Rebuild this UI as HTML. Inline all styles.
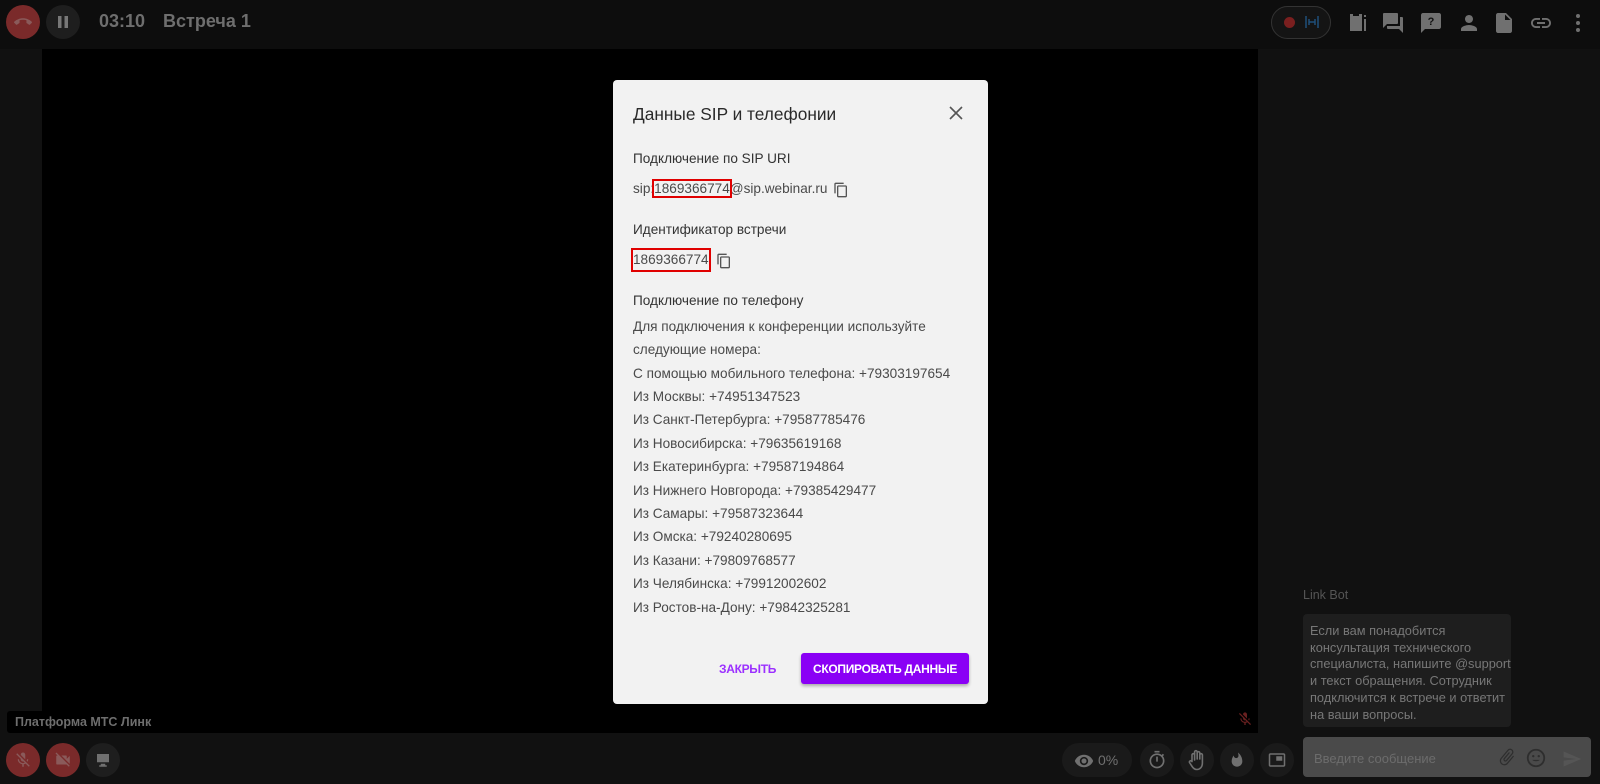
<!DOCTYPE html>
<html><head><meta charset="utf-8"><style>
*{margin:0;padding:0;box-sizing:border-box}
body{width:1600px;height:784px;background:#111;font-family:"Liberation Sans",Arial,sans-serif;position:relative;overflow:hidden}
.a{position:absolute}
.c{position:absolute;border-radius:50%;display:flex;align-items:center;justify-content:center}
.ln{position:absolute;left:633px;font-size:13.6px;color:#4a4a4a;white-space:nowrap}
</style></head><body>
<!-- top bar -->
<div class="a" style="left:0;top:0;width:1600px;height:49px;background:#0d0d0d"></div>
<div class="c" style="left:6px;top:5px;width:34px;height:34px;background:#7a2a2a"><svg width="18" height="18" viewBox="0 0 24 24"><path fill="#8a5a5a" d="M12 9c-1.6 0-3.15.25-4.6.72v3.1c0 .39-.23.74-.56.9-.98.49-1.87 1.120-2.66 1.85-.18.18-.43.28-.7.28-.28 0-.53-.11-.71-.29L.29 13.08a.96.96 0 0 1 0-1.4C3.34 8.780 7.46 7 12 7s8.66 1.78 11.71 4.67c.18.18.29.43.29.71 0 .28-.11.53-.29.71l-2.48 2.48c-.18.18-.43.29-.71.29-.27 0-.52-.11-.7-.28-.79-.74-1.69-1.36-2.67-1.85a1 1 0 0 1-.56-.9v-3.1C15.15 9.25 13.6 9 12 9z"/></svg></div>
<div class="c" style="left:46px;top:5px;width:34px;height:34px;background:#1e1e1e"><svg width="14" height="14" viewBox="0 0 14 14"><rect x="2" y="1" width="3.5" height="12" fill="#777"/><rect x="8.5" y="1" width="3.5" height="12" fill="#777"/></svg></div>
<div class="a" style="left:99px;top:11px;font-size:18px;font-weight:bold;color:#6e6e6e">03:10</div>
<div class="a" style="left:163px;top:11px;font-size:18px;font-weight:bold;color:#6e6e6e">Встреча 1</div>
<div class="a" style="left:1271px;top:6px;width:60px;height:33px;border:1px solid #333;border-radius:17px;background:#141414"></div>
<div class="c" style="left:1284px;top:17px;width:11px;height:11px;background:#7a1f1f"></div>
<svg class="a" style="left:1305px;top:14px" width="14" height="16" viewBox="0 0 14 16"><path d="M1 2v12M13 2v12M4 5v6M10 5v6M4 8h6" stroke="#1f4f7a" stroke-width="1.5"/></svg>
<svg class="a" style="left:1345px;top:11px" width="24" height="24" viewBox="0 0 24 24"><path fill="#707070" d="M5 3h3v2h6V3h3v17H5zM8 9h6v1.5H8zm0 3h6v1.5H8zm0 3h6v1.5H8zM19 8h2v12h-2zM19 4h2v2h-2z"/></svg>
<svg class="a" style="left:1381px;top:11px" width="24" height="24" viewBox="0 0 24 24"><path fill="#707070" d="M21 6h-2v9H6v2c0 .55.45 1 1 1h11l4 4V7c0-.55-.45-1-1-1zm-4 6V3c0-.55-.45-1-1-1H3c-.55 0-1 .45-1 1v14l4-4h10c.55 0 1-.45 1-1z"/></svg>
<svg class="a" style="left:1419px;top:11px" width="24" height="24" viewBox="0 0 24 24"><path fill="#707070" d="M20 2H4c-1.1 0-2 .9-2 2v18l4-4h14c1.1 0 2-.9 2-2V4c0-1.1-.9-2-2-2z"/><text x="12" y="14" font-size="11" font-weight="bold" fill="#111" text-anchor="middle" font-family="Liberation Sans">?</text></svg>
<svg class="a" style="left:1457px;top:11px" width="24" height="24" viewBox="0 0 24 24"><path fill="#707070" d="M12 12c2.21 0 4-1.79 4-4s-1.79-4-4-4-4 1.79-4 4 1.79 4 4 4zm0 2c-2.67 0-8 1.34-8 4v2h16v-2c0-2.66-5.33-4-8-4z"/></svg>
<svg class="a" style="left:1492px;top:11px" width="24" height="24" viewBox="0 0 24 24"><path fill="#707070" d="M6 2c-1.1 0-2 .9-2 2v16c0 1.1.9 2 2 2h12c1.1 0 2-.9 2-2V8l-6-6H6zm7 7V3.5L18.5 9H13z"/></svg>
<svg class="a" style="left:1529px;top:11px" width="24" height="24" viewBox="0 0 24 24"><path fill="#707070" d="M3.9 12c0-1.71 1.39-3.1 3.1-3.1h4V7H7c-2.76 0-5 2.24-5 5s2.240 5 5 5h4v-1.9H7c-1.71 0-3.1-1.39-3.1-3.1zM8 13h8v-2H8v2zm9-6h-4v1.9h4c1.71 0 3.1 1.39 3.1 3.1s-1.39 3.1-3.1 3.1h-4V17h4c2.76 0 5-2.24 5-5s-2.24-5-5-5z"/></svg>
<svg class="a" style="left:1566px;top:11px" width="24" height="24" viewBox="0 0 24 24"><circle cx="12" cy="5" r="2" fill="#707070"/><circle cx="12" cy="12" r="2" fill="#707070"/><circle cx="12" cy="19" r="2" fill="#707070"/></svg>
<!-- video -->
<div class="a" style="left:42px;top:49px;width:1216px;height:684px;background:#000"></div>
<div class="a" style="left:7px;top:711px;width:137px;height:22px;background:#000;border-radius:3px"></div>
<div class="a" style="left:15px;top:715px;font-size:12.5px;font-weight:bold;color:#6e6e6e">Платформа МТС Линк</div>
<svg class="a" style="left:1237px;top:711px" width="16" height="16" viewBox="0 0 24 24"><path fill="#6a2020" d="M19 11h-1.7c0 .74-.16 1.43-.43 2.05l1.23 1.23c.56-.98.9-2.09.9-3.28zm-4.02.17c0-.06.02-.11.02-.17V5c0-1.66-1.34-3-3-3S9 3.34 9 5v.18l5.98 5.99zM4.27 3 3 4.27l6.01 6.01V11c0 1.66 1.33 3 2.99 3 .22 0 .44-.03.65-.08l1.66 1.66c-.71.33-1.5.52-2.31.52-2.76 0-5.3-2.1-5.3-5.1H5c0 3.41 2.72 6.23 6 6.72V21h2v-3.28c.91-.13 1.77-.45 2.54-.9L19.73 21 21 19.73 4.27 3z"/></svg>
<!-- chat -->
<div class="a" style="left:1303px;top:588px;font-size:12.5px;color:#555">Link Bot</div>
<div class="a" style="left:1303px;top:614px;width:208px;height:113px;background:#1e1e1e;border-radius:4px;padding:9px 7px;font-size:12.8px;line-height:16.7px;color:#777;white-space:nowrap">Если вам понадобится<br>консультация технического<br>специалиста, напишите @support<br>и текст обращения. Сотрудник<br>подключится к встрече и ответит<br>на ваши вопросы.</div>
<div class="a" style="left:1303px;top:737px;width:288px;height:40px;background:#4a4a4a;border-radius:4px"></div>
<div class="a" style="left:1314px;top:751px;font-size:13px;color:#6c6c6c">Введите сообщение</div>
<svg class="a" style="left:1497px;top:747px" width="20" height="20" viewBox="0 0 24 24"><path fill="#2e2e2e" d="M16.5 6v11.5c0 2.21-1.79 4-4 4s-4-1.79-4-4V5a2.5 2.5 0 0 1 5 0v10.5c0 .55-.45 1-1 1s-1-.45-1-1V6H10v9.5a2.5 2.5 0 0 0 5 0V5c0-2.21-1.79-4-4-4S7 2.79 7 5v12.5c0 3.04 2.46 5.5 5.5 5.5s5.5-2.46 5.5-5.5V6h-1.5z" transform="rotate(40 12 12)"/></svg>
<svg class="a" style="left:1525px;top:747px" width="22" height="22" viewBox="0 0 24 24"><circle cx="12" cy="12" r="9" fill="none" stroke="#2e2e2e" stroke-width="2"/><circle cx="9" cy="10" r="1.3" fill="#2e2e2e"/><circle cx="15" cy="10" r="1.3" fill="#2e2e2e"/><path d="M8 14c1 2 7 2 8 0z" fill="#2e2e2e"/></svg>
<svg class="a" style="left:1562px;top:749px" width="20" height="20" viewBox="0 0 24 24"><path fill="#555" d="M2 21l21-9L2 3v7l15 2-15 2z"/></svg>
<!-- bottom controls -->
<div class="c" style="left:6px;top:743px;width:34px;height:34px;background:#7a2a2a"><svg width="18" height="18" viewBox="0 0 24 24"><path fill="#8a5a5a" d="M19 11h-1.7c0 .74-.16 1.43-.43 2.05l1.23 1.23c.56-.98.9-2.09.9-3.28zm-4.02.17c0-.06.02-.11.02-.17V5c0-1.66-1.34-3-3-3S9 3.34 9 5v.18l5.98 5.99zM4.27 3 3 4.27l6.01 6.01V11c0 1.66 1.33 3 2.99 3 .22 0 .44-.03.65-.08l1.66 1.66c-.71.33-1.5.52-2.31.52-2.76 0-5.3-2.1-5.3-5.1H5c0 3.41 2.72 6.23 6 6.72V21h2v-3.28c.91-.13 1.77-.45 2.54-.9L19.73 21 21 19.73 4.27 3z"/></svg></div>
<div class="c" style="left:46px;top:743px;width:34px;height:34px;background:#7a2a2a"><svg width="18" height="18" viewBox="0 0 24 24"><path fill="#8a5a5a" d="M21 6.5l-4 4V7c0-.55-.45-1-1-1H9.82L21 17.18V6.5zM3.27 2 2 3.27 4.73 6H4c-.55 0-1 .45-1 1v10c0 .55.45 1 1 1h12c.21 0 .39-.08.54-.18L19.73 21 21 19.73 3.27 2z"/></svg></div>
<div class="c" style="left:86px;top:743px;width:34px;height:34px;background:#1e1e1e"><svg width="18" height="18" viewBox="0 0 24 24"><path fill="#707070" d="M4 4h16v11H4zM9 17h6v2h2v2H7v-2h2z"/></svg></div>
<div class="a" style="left:1062px;top:743px;width:70px;height:34px;background:#1a1a1a;border-radius:17px"></div>
<svg class="a" style="left:1074px;top:751px" width="20" height="20" viewBox="0 0 24 24"><path fill="#707070" d="M12 4.5C7 4.5 2.73 7.61 1 12c1.73 4.39 6 7.5 11 7.5s9.27-3.11 11-7.5c-1.73-4.39-6-7.5-11-7.5zM12 17c-2.76 0-5-2.24-5-5s2.24-5 5-5 5 2.24 5 5-2.24 5-5 5zm0-8c-1.66 0-3 1.34-3 3s1.34 3 3 3 3-1.34 3-3-1.34-3-3-3z"/></svg>
<div class="a" style="left:1098px;top:752px;font-size:14px;color:#707070">0%</div>
<div class="c" style="left:1140px;top:743px;width:34px;height:34px;background:#1a1a1a"><svg width="20" height="20" viewBox="0 0 24 24"><path fill="#707070" d="M15 1H9v2h6V1zm-4 13h2V8h-2v6zm8.03-6.61 1.42-1.42c-.43-.51-.9-.99-1.41-1.41l-1.42 1.42A8.96 8.96 0 0 0 12 4c-4.97 0-9 4.03-9 9s4.02 9 9 9 9-4.03 9-9c0-2.12-.74-4.07-1.97-5.61zM12 20c-3.87 0-7-3.13-7-7s3.13-7 7-7 7 3.13 7 7-3.13 7-7 7z"/></svg></div>
<div class="c" style="left:1180px;top:743px;width:34px;height:34px;background:#1a1a1a"><svg width="20" height="22" viewBox="0 0 20 22"><path d="M5 12V6a1.3 1.3 0 0 1 2.6 0v5M7.6 10V3a1.3 1.3 0 0 1 2.6 0v7M10.2 10V4a1.3 1.3 0 0 1 2.6 0v6M12.8 10V6a1.3 1.3 0 0 1 2.6 0v8c0 4-2.5 6.5-5.5 6.5-2.5 0-3.8-1.3-5-3.3L2.5 13.5a1.3 1.3 0 0 1 2.2-1.3L5 12.5" fill="none" stroke="#707070" stroke-width="1.6" stroke-linecap="round" stroke-linejoin="round"/></svg></div>
<div class="c" style="left:1220px;top:743px;width:34px;height:34px;background:#1a1a1a"><svg width="16" height="18" viewBox="0 0 24 24"><path fill="#707070" d="M13.5.67s.74 2.65.74 4.8c0 2.06-1.35 3.73-3.41 3.73-2.07 0-3.63-1.67-3.63-3.73l.03-.36C5.21 7.51 4 10.62 4 14c0 4.42 3.58 8 8 8s8-3.58 8-8C20 8.61 17.41 3.8 13.5.67z"/></svg></div>
<div class="c" style="left:1260px;top:743px;width:34px;height:34px;background:#1a1a1a"><svg width="20" height="18" viewBox="0 0 24 24"><path fill="#707070" d="M19 7h-8v6h8V7zm2-4H3c-1.1 0-2 .9-2 2v14c0 1.1.9 2 2 2h18c1.1 0 2-.9 2-2V5c0-1.1-.9-2-2-2zm0 16H3V5h18v14z"/></svg></div>
<!-- modal -->
<div class="a" style="left:613px;top:80px;width:375px;height:624px;background:#f2f2f2;border-radius:4px"></div>
<div class="a" style="left:633px;top:104px;font-size:17.3px;color:#2a2a2a">Данные SIP и телефонии</div>
<svg class="a" style="left:949px;top:106px" width="14" height="14" viewBox="0 0 14 14"><path d="M1 1l12 12M13 1L1 13" stroke="#555" stroke-width="1.6"/></svg>
<div class="ln" style="top:151px;color:#333">Подключение по SIP URI</div>
<div class="ln" style="top:181px">sip:<span style="outline:2px solid #e00000">1869366774</span>@sip.webinar.ru</div>
<svg class="a" style="left:833px;top:181px" width="16" height="18" viewBox="0 0 24 24"><path fill="#555" d="M16 1H4c-1.1 0-2 .9-2 2v14h2V3h12V1zm3 4H8c-1.1 0-2 .9-2 2v14c0 1.1.9 2 2 2h11c1.1 0 2-.9 2-2V7c0-1.1-.9-2-2-2zm0 16H8V7h11v14z"/></svg>
<div class="ln" style="top:222px;color:#333">Идентификатор встречи</div>
<div class="a" style="left:631px;top:248px;width:80px;height:24px;border:2px solid #e00000"></div>
<div class="ln" style="top:252px">1869366774</div>
<svg class="a" style="left:716px;top:252px" width="16" height="18" viewBox="0 0 24 24"><path fill="#555" d="M16 1H4c-1.1 0-2 .9-2 2v14h2V3h12V1zm3 4H8c-1.1 0-2 .9-2 2v14c0 1.1.9 2 2 2h11c1.1 0 2-.9 2-2V7c0-1.1-.9-2-2-2zm0 16H8V7h11v14z"/></svg>
<div class="ln" style="top:293px;color:#333">Подключение по телефону</div>
<div class="ln" style="top:319px">Для подключения к конференции используйте</div>
<div class="ln" style="top:342px">следующие номера:</div>
<div class="ln" style="top:366px">С помощью мобильного телефона: +79303197654</div>
<div class="ln" style="top:389px">Из Москвы: +74951347523</div>
<div class="ln" style="top:412px">Из Санкт-Петербурга: +79587785476</div>
<div class="ln" style="top:436px">Из Новосибирска: +79635619168</div>
<div class="ln" style="top:459px">Из Екатеринбурга: +79587194864</div>
<div class="ln" style="top:483px">Из Нижнего Новгорода: +79385429477</div>
<div class="ln" style="top:506px">Из Самары: +79587323644</div>
<div class="ln" style="top:529px">Из Омска: +79240280695</div>
<div class="ln" style="top:553px">Из Казани: +79809768577</div>
<div class="ln" style="top:576px">Из Челябинска: +79912002602</div>
<div class="ln" style="top:600px">Из Ростов-на-Дону: +79842325281</div>
<div class="a" style="left:719px;top:662px;font-size:12px;font-weight:bold;color:#9b30ff;letter-spacing:-0.3px">ЗАКРЫТЬ</div>
<div class="a" style="left:801px;top:653px;width:168px;height:31px;background:#8a00f5;border-radius:3px;box-shadow:0 2px 3px rgba(0,0,0,.3);color:#fff;font-size:12px;font-weight:bold;letter-spacing:-0.3px;display:flex;align-items:center;justify-content:center">СКОПИРОВАТЬ ДАННЫЕ</div>
</body></html>
